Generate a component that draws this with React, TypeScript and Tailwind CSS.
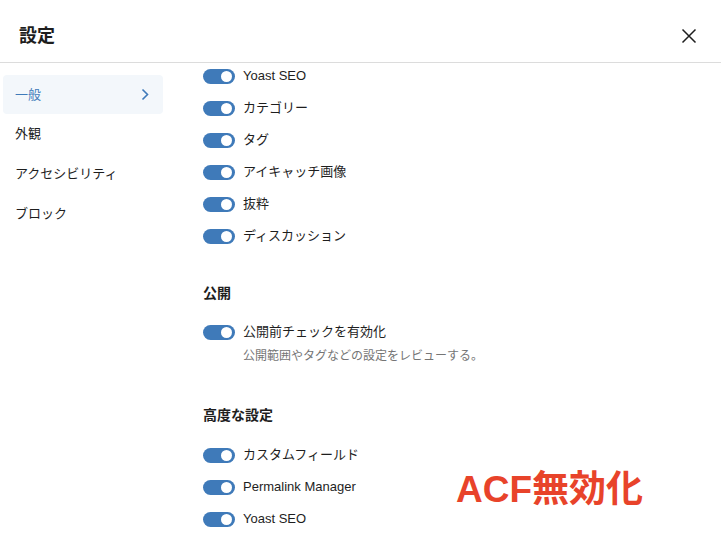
const font = { fontFamily: '"Liberation Sans", "Noto Sans CJK JP", sans-serif' }

function Toggle() {
  return (
    <span className="relative inline-block w-[32px] h-[15px] rounded-full bg-[#3f7ab9] shrink-0">
      <span className="absolute right-[3px] top-[2px] w-[11px] h-[11px] rounded-full bg-white" />
    </span>
  )
}

function Row({ label }: { label: string }) {
  return (
    <div className="flex items-center gap-2 h-[26px]">
      <Toggle />
      <span className="text-[13px] text-[#1e1e1e]">{label}</span>
    </div>
  )
}

export default function App() {
  const top = ['Yoast SEO', 'カテゴリー', 'タグ', 'アイキャッチ画像', '抜粋', 'ディスカッション']
  const adv = ['カスタムフィールド', 'Permalink Manager', 'Yoast SEO']
  return (
    <div className="relative w-[721px] h-[554px] overflow-hidden bg-white text-[#1e1e1e]" style={font}>
      <header className="flex items-center justify-between h-[63px] pt-[10px] border-b border-[#dcdcdc] pl-[19px] pr-[24px]">
        <h1 className="text-[18px] font-bold">設定</h1>
        <svg width="16" height="16" viewBox="0 0 16 16" className="text-[#1e1e1e]">
          <path d="M1.5 1.5 L14.5 14.5 M14.5 1.5 L1.5 14.5" stroke="currentColor" strokeWidth="1.5" fill="none" />
        </svg>
      </header>
      <div className="flex">
        <nav className="w-[203px] pl-[3px] pt-[12px] shrink-0">
          <div className="w-[160px] h-[39px] flex items-center justify-between pl-[12px] pr-[14px] bg-[#f3f7fb] rounded-sm">
            <span className="text-[13px] text-[#3f7ab9]">一般</span>
            <svg width="8" height="13" viewBox="0 0 8 13">
              <path d="M1.5 1.5 L6.5 6.5 L1.5 11.5" stroke="#3f7ab9" strokeWidth="1.6" fill="none" />
            </svg>
          </div>
          {['外観', 'アクセシビリティ', 'ブロック'].map((t) => (
            <div key={t} className="h-[40px] flex items-center pl-[12px] text-[13px]">
              {t}
            </div>
          ))}
        </nav>
        <main className="flex-1">
          <div className="flex flex-col gap-[6px]">
            {top.map((t) => (
              <Row key={t} label={t} />
            ))}
          </div>
          <h2 className="mt-[34px] text-[14px] font-bold leading-[20px]">公開</h2>
          <div className="mt-[16px]">
            <Row label="公開前チェックを有効化" />
            <p className="mt-[2px] pl-[40px] text-[12px] leading-[18px] text-[#757575]">
              公開範囲やタグなどの設定をレビューする。
            </p>
          </div>
          <h2 className="mt-[40px] text-[14px] font-bold leading-[20px]">高度な設定</h2>
          <div className="mt-[17px] flex flex-col gap-[6px]">
            {adv.map((t, i) => (
              <Row key={i} label={t} />
            ))}
          </div>
        </main>
      </div>
      <div className="absolute left-[456px] top-[471px] text-[37px] font-bold text-[#e8432a] leading-none">
        ACF無効化
      </div>
    </div>
  )
}
